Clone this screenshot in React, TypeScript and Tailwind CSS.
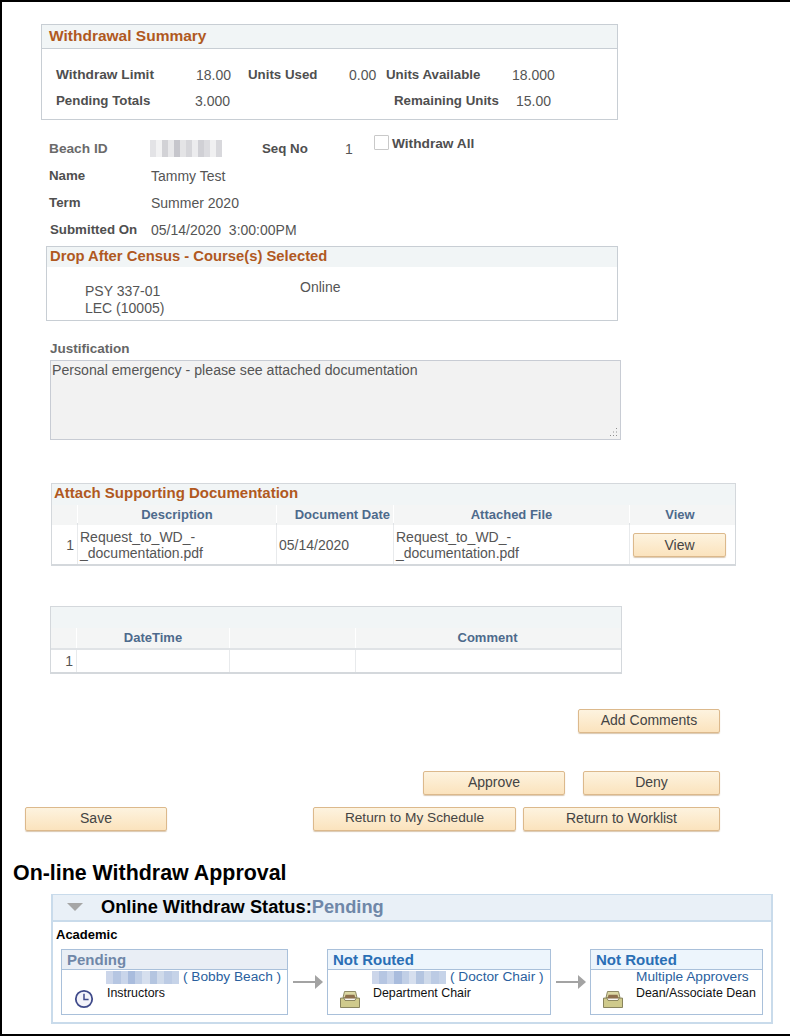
const LABEL = 'font-bold text-[13.3px] leading-[18px] text-[#4f4f4f]'
const LABEL_WIDE = 'font-bold text-[13.7px] leading-[18px] text-[#4f4f4f]'
const VALUE = 'text-[14px] leading-[18px] text-[#555555]'
const TITLE = 'font-bold leading-[18px] text-[#b0591f]'
const HEAD = 'flex items-center justify-center font-bold text-[13px] text-[#4d6a8c] bg-[#f4f5f5]'

const ID_TILES = ['#e3e3e6', '#f2f2f3', '#d2d2d6', '#e8e8ea', '#c6c6cc', '#e4e4e6', '#d6d6da', '#ececee', '#d0d0d5', '#dcdce0', '#f0f0f1', '#d8d8dc']
const NAME_TILES = ['#ccd6ea', '#b6c6e2', '#c9d5ea', '#a9bcdd', '#c1cfe6', '#d6dfee', '#b4c5e0', '#cfdaea', '#bccbe4', '#c6d3e8']

function Mosaic({ tiles, className }: { tiles: string[]; className: string }) {
  return (
    <div className={`flex ${className}`}>
      {tiles.map((color, i) => (
        <span key={i} className="h-full flex-1" style={{ backgroundColor: color }} />
      ))}
    </div>
  )
}

function Btn({ label, className = '', textClass = 'text-[14px]' }: { label: string; className?: string; textClass?: string }) {
  return (
    <button
      type="button"
      className={`h-[24px] rounded-[2px] border border-[#dcb98c] bg-gradient-to-b from-[#fdf3df] to-[#fbe3bd] text-[#444444] shadow-[0_1px_1px_rgba(170,130,80,0.45)] ${textClass} ${className}`}
    >
      {label}
    </button>
  )
}

function ClockIcon() {
  return (
    <svg width="20" height="20" viewBox="0 0 20 20" fill="none" className="shrink-0">
      <circle cx="10" cy="10" r="8.2" fill="#f3f3fa" stroke="#3f4a8a" strokeWidth="1.8" />
      <path d="M10 4.8V10.6H14.6" stroke="#3f4a8a" strokeWidth="1.5" />
    </svg>
  )
}

function InboxIcon() {
  return (
    <svg width="20" height="17" viewBox="0 0 20 18" preserveAspectRatio="none" className="shrink-0">
      <path d="M4.5 0.5H15.5L17 7H3Z" fill="#dcd8a4" stroke="#8a8560" />
      <path d="M5.5 4H14.5L15.5 8H4.5Z" fill="#8d6f4c" />
      <path d="M0.5 7.5H4L5 10H15L16 7.5H19.5V17.5H0.5Z" fill="#cfca8c" stroke="#85805a" />
    </svg>
  )
}

function Arrow() {
  return (
    <svg width="30" height="14" viewBox="0 0 30 14" className="shrink-0">
      <path d="M0 7H23" stroke="#a3a3a3" strokeWidth="2" />
      <path d="M22 0L30 7L22 14Z" fill="#a3a3a3" />
    </svg>
  )
}

function Step({
  status,
  muted,
  icon,
  iconClass,
  who,
  role,
  className,
}: {
  status: string
  muted?: boolean
  icon: React.ReactNode
  iconClass: string
  who: React.ReactNode
  role: string
  className: string
}) {
  return (
    <div className={`flex h-[66px] shrink-0 flex-col border border-[#a9c0da] ${className}`}>
      <div
        className={`h-[20px] border-b border-[#a9c0da] pl-[5px] text-[15px] leading-[20px] font-bold ${
          muted ? 'bg-[#e9eef5] text-[#6f87a8]' : 'bg-[#edf5fc] text-[#2a6fb5]'
        }`}
      >
        {status}
      </div>
      <div className="flex flex-1">
        <div className={`flex w-[44px] shrink-0 items-end justify-center ${iconClass}`}>{icon}</div>
        <div className="flex flex-col">
          <div className="flex h-[16px] items-center gap-[4px] text-[13.7px] whitespace-nowrap text-[#2a5f9e]">{who}</div>
          <div className="ml-[1px] text-[12.4px] leading-[14px] whitespace-nowrap text-[#111111]">{role}</div>
        </div>
      </div>
    </div>
  )
}

export default function App() {
  return (
    <div className="flex h-[1036px] w-[790px] flex-col overflow-hidden border-t-2 border-b-2 border-l-2 border-black bg-white font-['Liberation_Sans',Arial,sans-serif]">
      {/* summary */}
      <section className="mt-[22px] ml-[39px] h-[96px] w-[577px] shrink-0 border border-[#c8ced4]">
        <div className="h-[24px] border-b border-[#c8ced4] bg-[#f1f5f6] pl-[7px] text-[15.5px] leading-[22px] font-bold text-[#b0591f]">
          Withdrawal Summary
        </div>
        <div className="mt-[13px] flex h-[26px] items-center pl-[14px]">
          <span className={`${LABEL_WIDE} w-[140px]`}>Withdraw Limit</span>
          <span className={`${VALUE} w-[52px]`}>18.00</span>
          <span className={`${LABEL} w-[101px]`}>Units Used</span>
          <span className={`${VALUE} w-[37px]`}>0.00</span>
          <span className={`${LABEL} w-[126px]`}>Units Available</span>
          <span className={VALUE}>18.000</span>
        </div>
        <div className="flex h-[26px] items-center pl-[14px]">
          <span className={`${LABEL} w-[139px]`}>Pending Totals</span>
          <span className={`${VALUE} w-[199px]`}>3.000</span>
          <span className={`${LABEL} w-[122px]`}>Remaining Units</span>
          <span className={VALUE}>15.00</span>
        </div>
      </section>

      {/* student info */}
      <div className="ml-[47px] flex h-[126px] shrink-0 flex-col pt-[15px]">
        <div className="flex h-[27px] items-center">
          <span className="w-[101px] text-[13.7px] leading-[18px] font-bold text-[#6a6a6a]">Beach ID</span>
          <Mosaic tiles={ID_TILES} className="h-[17px] w-[72px]" />
          <span className={`${LABEL} ml-[40px] w-[83px]`}>Seq No</span>
          <span className={`${VALUE} w-[29px]`}>1</span>
          <span className="h-[15px] w-[15px] self-start rounded-[1px] border border-[#c9c9c9] bg-white" />
          <span className={`${LABEL_WIDE} ml-[3px] self-start`}>Withdraw All</span>
        </div>
        <div className="flex h-[27px] items-center">
          <span className={`${LABEL} w-[102px]`}>Name</span>
          <span className={VALUE}>Tammy Test</span>
        </div>
        <div className="flex h-[27px] items-center">
          <span className={`${LABEL} w-[102px]`}>Term</span>
          <span className={VALUE}>Summer 2020</span>
        </div>
        <div className="flex h-[27px] items-center">
          <span className={`${LABEL} ml-[1px] w-[101px]`}>Submitted On</span>
          <span className={`${VALUE} whitespace-pre`}>05/14/2020  3:00:00PM</span>
        </div>
      </div>

      {/* selected course */}
      <section className="ml-[44px] h-[75px] w-[572px] shrink-0 border border-[#c8ced4]">
        <div className={`h-[20px] bg-[#f1f5f6] pl-[3px] text-[14.8px] ${TITLE}`}>Drop After Census - Course(s) Selected</div>
        <div className="flex">
          <div className={`ml-[38px] w-[215px] pt-[16px] ${VALUE}`}>
            <div className="h-[17px] leading-[17px]">PSY 337-01</div>
            <div className="h-[17px] leading-[17px]">LEC (10005)</div>
          </div>
          <span className={`${VALUE} pt-[11px]`}>Online</span>
        </div>
      </section>

      {/* justification */}
      <div className="mt-[19px] ml-[48px] h-[20px] shrink-0 text-[13.5px] leading-[18px] font-bold text-[#666666]">Justification</div>
      <div className="relative ml-[48px] h-[80px] w-[571px] shrink-0 border border-[#c8ccd4] bg-[#f2f2f2] pl-[1px] text-[14.15px] leading-[18px] text-[#555555]">
        Personal emergency - please see attached documentation
        <svg width="10" height="10" viewBox="0 0 10 10" className="absolute right-[2px] bottom-[2px]">
          <path d="M8 1h1v1H8zM5 4.5h1v1H5zM8 4.5h1v1H8zM2 8h1v1H2zM5 8h1v1H5zM8 8h1v1H8z" fill="#8f8f8f" />
        </svg>
      </div>

      {/* attachments */}
      <section className="mt-[43px] ml-[49px] w-[685px] shrink-0 border border-b-[2px] border-[#d4d8dc]">
        <div className={`h-[21px] bg-[#f1f5f6] pl-[2px] text-[15px] ${TITLE}`}>Attach Supporting Documentation</div>
        <div className="grid h-[20px] grid-cols-[25px_198px_116px_235px_105px] gap-x-[1px] border-b-2 border-[#e0e3e6] bg-white">
          <div className={HEAD} />
          <div className={HEAD}>Description</div>
          <div className={`${HEAD} justify-end pr-[3px]`}>Document Date</div>
          <div className={HEAD}>Attached File</div>
          <div className={`${HEAD} pr-[5px]`}>View</div>
        </div>
        <div className="grid h-[39px] grid-cols-[25px_198px_116px_235px_105px] gap-x-[1px] bg-[#e8eaec] text-[14px] leading-[16px] text-[#555555]">
          <div className="flex items-center justify-end bg-white pr-[3px]">1</div>
          <div className="flex items-center bg-white pl-[2px]">
            Request_to_WD_-
            <br />
            _documentation.pdf
          </div>
          <div className="flex items-center bg-white pl-[2px]">05/14/2020</div>
          <div className="flex items-center bg-white pl-[2px]">
            Request_to_WD_-
            <br />
            _documentation.pdf
          </div>
          <div className="flex items-center bg-white pl-[3px]">
            <Btn label="View" className="w-[93px]" />
          </div>
        </div>
      </section>

      {/* comments */}
      <section className="mt-[40px] ml-[48px] w-[572px] shrink-0 border border-b-[2px] border-[#d4d8dc]">
        <div className="h-[21px] bg-[#f1f5f6]" />
        <div className="grid h-[22px] grid-cols-[25px_152px_125px_1fr] gap-x-[1px] border-b-2 border-[#e0e3e6] bg-white">
          <div className={HEAD} />
          <div className={HEAD}>DateTime</div>
          <div className={HEAD} />
          <div className={`${HEAD} pr-[2px]`}>Comment</div>
        </div>
        <div className="grid h-[22px] grid-cols-[25px_152px_125px_1fr] gap-x-[1px] bg-[#e8eaec] text-[14px] text-[#555555]">
          <div className="flex items-center justify-end bg-white pr-[3px]">1</div>
          <div className="bg-white" />
          <div className="bg-white" />
          <div className="bg-white" />
        </div>
      </section>

      {/* actions */}
      <div className="mt-[34px] ml-[576px] shrink-0">
        <Btn label="Add Comments" className="w-[142px]" />
      </div>
      <div className="mt-[38px] ml-[421px] flex shrink-0 gap-[18px]">
        <Btn label="Approve" className="w-[142px]" />
        <Btn label="Deny" className="w-[137px]" />
      </div>
      <div className="mt-[12px] ml-[23px] flex shrink-0">
        <Btn label="Save" className="w-[142px]" />
        <Btn label="Return to My Schedule" className="ml-[146px] w-[203px]" textClass="text-[13.7px]" />
        <Btn label="Return to Worklist" className="ml-[7px] w-[197px]" />
      </div>

      <h1 className="mt-[28px] ml-[11px] h-[28px] shrink-0 text-[21.4px] leading-[28px] font-bold text-black">On-line Withdraw Approval</h1>

      {/* approval status */}
      <section className="mt-[7px] ml-[49px] h-[130px] w-[722px] shrink-0 border-2 border-t border-[#c9dbeb]">
        <div className="flex h-[27px] items-center border-b-2 border-[#c9dbeb] bg-[#e9f0f7] pl-[14px]">
          <span className="h-0 w-0 border-x-[8px] border-t-[8px] border-x-transparent border-t-[#a6a6a6]" />
          <span className="ml-[18px] text-[18.25px] font-bold text-black">Online Withdraw Status:</span>
          <span className="text-[18.25px] font-bold text-[#6f87a8]">Pending</span>
        </div>
        <div className="mt-[4px] ml-[3px] h-[17px] text-[13px] leading-[17px] font-bold text-black">Academic</div>
        <div className="mt-[6px] ml-[8px] flex items-center">
          <Step
            status="Pending"
            muted
            icon={<ClockIcon />}
            iconClass="pb-[5px]"
            who={
              <>
                <Mosaic tiles={NAME_TILES} className="h-[13px] w-[73px]" />
                <span>( Bobby Beach )</span>
              </>
            }
            role="Instructors"
            className="w-[227px]"
          />
          <span className="mr-[4px] ml-[5px] flex">
            <Arrow />
          </span>
          <Step
            status="Not Routed"
            icon={<InboxIcon />}
            iconClass="pb-[6px]"
            who={
              <>
                <Mosaic tiles={NAME_TILES} className="h-[13px] w-[74px]" />
                <span>( Doctor Chair )</span>
              </>
            }
            role="Department Chair"
            className="w-[224px]"
          />
          <span className="mr-[4px] ml-[5px] flex">
            <Arrow />
          </span>
          <Step
            status="Not Routed"
            icon={<InboxIcon />}
            iconClass="pb-[6px]"
            who={<span className="ml-[1px]">Multiple Approvers</span>}
            role="Dean/Associate Dean"
            className="w-[173px]"
          />
        </div>
      </section>
    </div>
  )
}
